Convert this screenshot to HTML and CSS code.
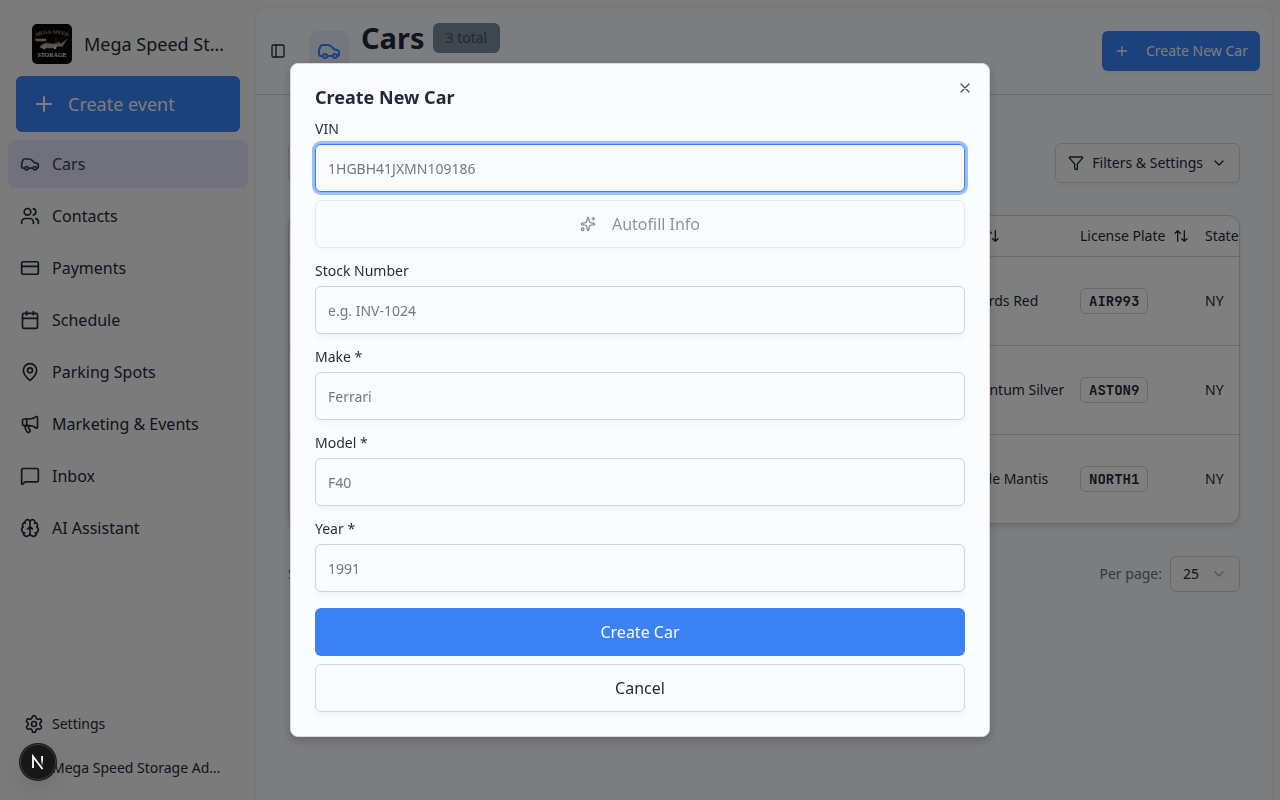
FILE: index.html
```
<!DOCTYPE html>
<html lang="en">
<head>
    <meta charset="UTF-8">
    <meta name="viewport" content="width=device-width, initial-scale=1.0">
    <title>Cars</title>
    <link rel="stylesheet" href="styles.css">
</head>
<body>
<div class="app">
    <aside class="sidebar">
        <div class="brand">
            <svg class="brand-logo" viewBox="0 0 40 40">
                <rect width="40" height="40" rx="5" fill="#070707"/>
                <path id="arc" d="M2 13 Q20 6 38 13" fill="none"/>
                <text class="logo-top" text-anchor="middle"><textPath href="#arc" startOffset="50%">MEGA SPEED</textPath></text>
                <path d="M3 15h11v2H4zM9 21l5-2 7 1 6-1v3l-5 2H8zM24 14v7M26 17l3 3 6-5-5 8-3-1z" fill="#b5afa4" stroke="#8d8579" stroke-width=".5"/>
                <circle cx="12" cy="24" r="1.3" fill="#ddd"/>
                <circle cx="23" cy="24" r="1.3" fill="#ddd"/>
                <text class="logo-bottom" x="20" y="33" text-anchor="middle">STORAGE</text>
            </svg>
            <span class="brand-name">Mega Speed Storage</span>
        </div>
        <button class="btn btn-primary create-event" type="button">
            <svg class="icon icon-lg" viewBox="0 0 24 24"><path d="M5 12h14M12 5v14"/></svg>
            Create event
        </button>
        <nav class="nav">
            <a class="nav-item active" href="#">
                <svg class="icon icon-md" viewBox="0 0 24 24"><path d="M6 17H4a2 2 0 0 1-2-2v-4l1.500-3.500A2 2 0 0 1 5.300 6H11c1.500 0 2.600.7 3.500 1.600L17.500 10.500l3 .7A2 2 0 0 1 22 13.100V16a1 1 0 0 1-1 1h-1"/><circle cx="8" cy="17" r="2"/><path d="M10 17h6"/><circle cx="18" cy="17" r="2"/></svg>
                Cars
            </a>
            <a class="nav-item" href="#">
                <svg class="icon icon-md" viewBox="0 0 24 24"><path d="M16 21v-2a4 4 0 0 0-4-4H6a4 4 0 0 0-4 4v2"/><circle cx="9" cy="7" r="4"/><path d="M22 21v-2a4 4 0 0 0-3-3.870M16 3.130a4 4 0 0 1 0 7.750"/></svg>
                Contacts
            </a>
            <a class="nav-item" href="#">
                <svg class="icon icon-md" viewBox="0 0 24 24"><rect x="2" y="4.500" width="20" height="15" rx="2"/><path d="M2 10h20"/></svg>
                Payments
            </a>
            <a class="nav-item" href="#">
                <svg class="icon icon-md" viewBox="0 0 24 24"><path d="M8 2v4M16 2v4M3 10h18"/><rect x="3" y="4" width="18" height="18" rx="2"/></svg>
                Schedule
            </a>
            <a class="nav-item" href="#">
                <svg class="icon icon-md" viewBox="0 0 24 24"><path d="M20 10c0 4.993-5.539 10.193-7.399 11.799a1 1 0 0 1-1.202 0C9.539 20.193 4 14.993 4 10a8 8 0 0 1 16 0"/><circle cx="12" cy="10" r="3"/></svg>
                Parking Spots
            </a>
            <a class="nav-item" href="#">
                <svg class="icon icon-md" viewBox="0 0 24 24"><path d="M11 6a13 13 0 0 0 8.400-2.800A1 1 0 0 1 21 4v12a1 1 0 0 1-1.600.8A13 13 0 0 0 11 14H5a2 2 0 0 1-2-2V8a2 2 0 0 1 2-2z"/><path d="M6 14a12 12 0 0 0 2.400 7.200 2 2 0 0 0 3.200-2.400A8 8 0 0 1 10 14M8 6v8"/></svg>
                Marketing &amp; Events
            </a>
            <a class="nav-item" href="#">
                <svg class="icon icon-md" viewBox="0 0 24 24"><path d="M22 17a2 2 0 0 1-2 2H6.828a2 2 0 0 0-1.414.586l-2.202 2.202A.71.71 0 0 1 2 21.286V5a2 2 0 0 1 2-2h16a2 2 0 0 1 2 2z"/></svg>
                Inbox
            </a>
            <a class="nav-item" href="#">
                <svg class="icon icon-md" viewBox="0 0 24 24"><path d="M12 18V5M15 13a4.170 4.170 0 0 1-3-4 4.170 4.170 0 0 1-3 4M17.598 6.500A3 3 0 1 0 12 5a3 3 0 1 0-5.598 1.500M17.997 5.125a4 4 0 0 1 2.526 5.770M18 18a4 4 0 0 0 2-7.464M19.967 17.483A4 4 0 1 1 12 18a4 4 0 1 1-7.967-.517M6 18a4 4 0 0 1-2-7.464M6.003 5.125a4 4 0 0 0-2.526 5.770"/></svg>
                AI Assistant
            </a>
        </nav>
        <div class="sidebar-footer">
            <a class="footer-item" href="#">
                <svg class="icon icon-md" viewBox="0 0 24 24"><path d="M9.671 4.136a2.340 2.340 0 0 1 4.659 0 2.340 2.340 0 0 0 3.319 1.915 2.340 2.340 0 0 1 2.330 4.033 2.340 2.340 0 0 0 0 3.831 2.340 2.340 0 0 1-2.330 4.033 2.340 2.340 0 0 0-3.319 1.915 2.340 2.340 0 0 1-4.659 0 2.340 2.340 0 0 0-3.320-1.915 2.340 2.340 0 0 1-2.330-4.033 2.340 2.340 0 0 0 0-3.831A2.340 2.340 0 0 1 6.350 6.051a2.340 2.340 0 0 0 3.319-1.915"/><circle cx="12" cy="12" r="3"/></svg>
                <span>Settings</span>
            </a>
            <a class="footer-item" href="#">
                <i class="avatar"></i>
                <span>Mega Speed Storage Admin</span>
            </a>
        </div>
    </aside>

    <main class="main">
        <header class="page-header">
            <button class="toggle" type="button" aria-label="Toggle sidebar">
                <svg class="icon icon-sm" viewBox="0 0 24 24"><rect x="3" y="3" width="18" height="18" rx="2"/><path d="M9 3v18"/></svg>
            </button>
            <div class="page-icon">
                <svg class="icon icon-lg" viewBox="0 0 24 24"><path d="M6 17H4a2 2 0 0 1-2-2v-4l1.500-3.500A2 2 0 0 1 5.300 6H11c1.500 0 2.600.7 3.500 1.600L17.500 10.500l3 .7A2 2 0 0 1 22 13.100V16a1 1 0 0 1-1 1h-1"/><circle cx="8" cy="17" r="2"/><path d="M10 17h6"/><circle cx="18" cy="17" r="2"/></svg>
            </div>
            <div class="page-title">
                <h1>Cars</h1>
                <span class="badge">3 total</span>
            </div>
            <button class="btn btn-primary create-car" type="button">
                <svg class="icon icon-sm" viewBox="0 0 24 24"><path d="M5 12h14M12 5v14"/></svg>
                Create New Car
            </button>
        </header>

        <section class="content">
            <div class="toolbar">
                <input class="search" type="search" aria-label="Search cars">
                <button class="btn btn-outline" type="button">
                    <svg class="icon icon-sm" viewBox="0 0 24 24"><path d="M10 20a1 1 0 0 0 .553.895l2 1A1 1 0 0 0 14 21v-7a2 2 0 0 1 .517-1.341L21.740 4.670A1 1 0 0 0 21 3H3a1 1 0 0 0-.742 1.670l7.225 7.989A2 2 0 0 1 10 14z"/></svg>
                    Filters &amp; Settings
                    <svg class="icon icon-sm" viewBox="0 0 24 24"><path d="m6 9 6 6 6-6"/></svg>
                </button>
            </div>

            <div class="table-card">
                <table>
                    <colgroup>
                        <col>
                        <col class="col-color">
                        <col class="col-plate">
                        <col class="col-state">
                    </colgroup>
                    <thead>
                        <tr>
                            <th></th>
                            <th><span class="sort">Color <svg class="icon icon-sm" viewBox="0 0 24 24"><path d="m3 8 4-4 4 4M7 4v16M21 16l-4 4-4-4M17 20V4"/></svg></span></th>
                            <th><span class="sort">License Plate <svg class="icon icon-sm" viewBox="0 0 24 24"><path d="m3 8 4-4 4 4M7 4v16M21 16l-4 4-4-4M17 20V4"/></svg></span></th>
                            <th>State</th>
                        </tr>
                    </thead>
                    <tbody>
                        <tr><td></td><td class="color">Guards Red</td><td><span class="plate">AIR993</span></td><td>NY</td></tr>
                        <tr><td></td><td class="color">Quantum Silver</td><td><span class="plate">ASTON9</span></td><td>NY</td></tr>
                        <tr><td></td><td class="color">Verde Mantis</td><td><span class="plate">NORTH1</span></td><td>NY</td></tr>
                    </tbody>
                </table>
            </div>

            <div class="pager">
                <span class="showing">Showing</span>
                <label for="per-page">Per page:</label>
                <div class="select">
                    <select id="per-page">
                        <option>25</option>
                    </select>
                    <svg class="icon icon-sm" viewBox="0 0 24 24"><path d="m6 9 6 6 6-6"/></svg>
                </div>
            </div>
        </section>
    </main>
</div>

<div class="overlay">
    <form class="dialog" role="dialog" aria-labelledby="dialog-title">
        <h2 id="dialog-title">Create New Car</h2>
        <button class="close" type="button" aria-label="Close">
            <svg class="icon icon-sm" viewBox="0 0 24 24"><path d="M18 6 6 18M6 6l12 12"/></svg>
        </button>
        <div class="field">
            <label for="vin">VIN</label>
            <input class="focused" id="vin" type="text" placeholder="1HGBH41JXMN109186">
            <button class="btn btn-outline btn-block" type="button" disabled>
                <svg class="icon icon-sm" viewBox="0 0 24 24"><path d="M11.017 2.814a1 1 0 0 1 1.966 0l1.051 5.558a2 2 0 0 0 1.594 1.594l5.558 1.051a1 1 0 0 1 0 1.966l-5.558 1.051a2 2 0 0 0-1.594 1.594l-1.051 5.558a1 1 0 0 1-1.966 0l-1.051-5.558a2 2 0 0 0-1.594-1.594l-5.558-1.051a1 1 0 0 1 0-1.966l5.558-1.051a2 2 0 0 0 1.594-1.594zM20 2v4M22 4h-4"/><circle cx="4" cy="20" r="2"/></svg>
                Autofill Info
            </button>
        </div>
        <div class="field">
            <label for="stock">Stock Number</label>
            <input id="stock" type="text" placeholder="e.g. INV-1024">
        </div>
        <div class="field">
            <label for="make">Make *</label>
            <input id="make" type="text" placeholder="Ferrari">
        </div>
        <div class="field">
            <label for="model">Model *</label>
            <input id="model" type="text" placeholder="F40">
        </div>
        <div class="field">
            <label for="year">Year *</label>
            <input id="year" type="text" placeholder="1991">
        </div>
        <div class="actions">
            <button class="btn btn-primary btn-block" type="submit">Create Car</button>
            <button class="btn btn-outline btn-block" type="button">Cancel</button>
        </div>
    </form>
</div>

<button class="dev-badge" type="button" aria-label="Dev tools">
    <svg viewBox="0 0 20 20">
        <defs>
            <linearGradient id="fade" x1="0" y1="0" x2="0" y2="1">
                <stop offset="0.4" stop-color="#fff"/>
                <stop offset="1" stop-color="#fff" stop-opacity="0"/>
            </linearGradient>
        </defs>
        <path d="M5 16V4.500L14.500 17" fill="none" stroke="#fff" stroke-width="1.800"/>
        <rect x="13.200" y="4" width="1.800" height="10" fill="url(#fade)"/>
    </svg>
</button>
</body>
</html>
```
FILE: styles.css
```
* {
    box-sizing: border-box;
}

body {
    margin: 0;
    font-family: "Noto Sans", sans-serif;
    font-size: 14px;
    line-height: 20px;
    color: #1e293b;
    background: #f6f6f6;
}

h1, h2 {
    margin: 0;
}

a {
    color: inherit;
    text-decoration: none;
}

button, input, select {
    font: inherit;
    color: inherit;
}

/* icons */
.icon {
    flex: none;
    fill: none;
    stroke: currentColor;
    stroke-width: 2;
    stroke-linecap: round;
    stroke-linejoin: round;
}

.icon-sm { width: 16px; height: 16px; }
.icon-md { width: 20px; height: 20px; }
.icon-lg { width: 24px; height: 24px; }

/* buttons */
.btn {
    display: flex;
    align-items: center;
    border: 1px solid transparent;
    border-radius: 6px;
    white-space: nowrap;
    cursor: pointer;
}

.btn-primary {
    color: #f8fafc;
    background: #3b82f6;
}

.btn-outline {
    height: 40px;
    padding: 0 12px;
    gap: 8px;
    border-color: #d4d6da;
    background: #fafbfd;
    box-shadow: 0 4px 6px rgba(0, 0, 0, 0.04);
}

.btn-block {
    justify-content: center;
    width: 100%;
    height: 48px;
    gap: 16px;
    font-size: 16px;
}

.btn:disabled {
    opacity: 0.5;
}

/* layout */
.app {
    display: flex;
    min-height: 100vh;
}

.sidebar {
    display: flex;
    flex-direction: column;
    flex: none;
    width: 256px;
    padding: 24px 8px 12px;
}

.brand {
    display: flex;
    align-items: center;
    gap: 12px;
    padding: 0 24px;
}

.brand-logo {
    flex: none;
    width: 40px;
    height: 40px;
}

.logo-top, .logo-bottom {
    font-family: "Liberation Serif", serif;
    font-weight: bold;
    font-size: 5px;
    fill: #b3925e;
}

.logo-bottom {
    font-size: 6px;
    fill: #e2e2e2;
}

.brand-name {
    overflow: hidden;
    max-width: 140px;
    font-size: 18px;
    line-height: 28px;
    text-overflow: ellipsis;
    white-space: nowrap;
}

.create-event {
    height: 56px;
    margin: 12px 8px 8px;
    padding: 0 15px;
    gap: 12px;
    font-size: 18px;
}

.nav {
    display: flex;
    flex-direction: column;
    gap: 4px;
}

.nav-item {
    display: flex;
    align-items: center;
    gap: 12px;
    height: 48px;
    padding: 0 12px;
    border-radius: 6px;
    font-size: 16px;
}

.nav-item.active {
    background: #e0e2fa;
    color: #334155;
}

.sidebar-footer {
    display: flex;
    flex-direction: column;
    gap: 4px;
    margin-top: auto;
}

.footer-item {
    display: flex;
    align-items: center;
    gap: 8px;
    height: 40px;
    padding: 0 24px 0 16px;
}

.footer-item span {
    overflow: hidden;
    text-overflow: ellipsis;
    white-space: nowrap;
}

.avatar {
    flex: none;
    width: 20px;
    height: 20px;
    border-radius: 50%;
    background: #e2e8f0;
}

.main {
    flex: 1;
    min-width: 0;
    margin: 8px 8px 0 0;
    border-radius: 12px 12px 0 0;
    background: #f9fbfe;
    box-shadow: 0 1px 4px rgba(0, 0, 0, 0.1);
}

/* page header */
.page-header {
    display: flex;
    align-items: center;
    gap: 12px;
    height: 87px;
    padding: 0 12px;
    border-bottom: 1px solid #d0d2d6;
}

.toggle {
    display: flex;
    justify-content: center;
    width: 20px;
    margin-right: 9px;
    padding: 0;
    border: 0;
    background: none;
}

.page-icon {
    display: flex;
    padding: 8px;
    border-radius: 8px;
    color: #3b82f6;
    background: #e6effd;
}

.page-title {
    display: flex;
    align-items: center;
    gap: 8px;
    height: 36px;
    margin-bottom: 26px;
}

.page-title h1 {
    font-size: 29px;
    line-height: 36px;
}

.badge {
    padding: 5px 13px;
    border-radius: 6px;
    color: #465260;
    background: #7c8c9c;
}

.create-car {
    height: 40px;
    margin-left: auto;
    padding: 0 11px;
    gap: 16px;
    box-shadow: 0 4px 6px rgba(0, 0, 0, 0.04);
}

/* content */
.content {
    display: flex;
    flex-direction: column;
    gap: 32px;
    padding: 48px 32px 32px;
}

.toolbar {
    display: flex;
    justify-content: space-between;
}

.search {
    width: 320px;
    height: 40px;
    border: 1px solid #d4d6da;
    border-radius: 6px;
    background: #fafbfd;
}

.table-card {
    overflow: hidden;
    border: 1px solid #cfd1d4;
    border-radius: 12px;
    background: #fff;
    box-shadow: 0 4px 6px rgba(0, 0, 0, 0.1);
}

/* columns run past the card edge */
table {
    width: calc(100% + 38px);
    table-layout: fixed;
    border-collapse: separate;
    border-spacing: 0;
}

.col-color { width: 139px; }
.col-plate { width: 125px; }
.col-state { width: 80px; }

th, td {
    padding: 0 8px;
    border-bottom: 1px solid #cfd1d4;
    text-align: left;
    font-weight: 400;
    white-space: nowrap;
}

th {
    height: 41px;
}

td {
    height: 89px;
}

tr:last-child td {
    height: 88px;
    border-bottom: 0;
}

td.color {
    padding-left: 29px;
}

.sort {
    display: flex;
    align-items: center;
    gap: 8px;
}

.plate {
    display: inline-block;
    padding: 2px 8px;
    border: 1px solid #cfd1d4;
    border-radius: 6px;
    font-family: "JetBrains Mono", "DejaVu Sans Mono", monospace;
    font-weight: 600;
}

.pager {
    display: flex;
    align-items: center;
    gap: 8px;
    color: #6b7280;
}

.showing {
    margin-right: auto;
}

.select {
    position: relative;
    color: #1e293b;
}

.select select {
    width: 70px;
    height: 36px;
    padding: 0 12px;
    border: 1px solid #d0d2d6;
    border-radius: 6px;
    background: #fafbfd;
    appearance: none;
}

.select .icon {
    position: absolute;
    top: 10px;
    right: 13px;
    opacity: 0.4;
}

/* dialog */
.overlay {
    position: fixed;
    inset: 0;
    display: grid;
    place-items: center;
    background: rgba(0, 0, 0, 0.5);
}

.dialog {
    position: relative;
    display: flex;
    flex-direction: column;
    gap: 16px;
    width: 100%;
    max-width: 700px;
    padding: 24px;
    border: 1px solid #d8dade;
    border-radius: 8px;
    background: #fafcfe;
    box-shadow: 0 4px 10px rgba(0, 0, 0, 0.2);
}

.dialog h2 {
    font-size: 18px;
    line-height: 18px;
    font-weight: 700;
}

.close {
    position: absolute;
    top: 16px;
    right: 16px;
    display: flex;
    padding: 0;
    border: 0;
    background: none;
    opacity: 0.8;
}

.field, .actions {
    display: flex;
    flex-direction: column;
    gap: 8px;
}

.field label {
    line-height: 14px;
}

.field input {
    width: 100%;
    height: 48px;
    padding: 0 12px;
    border: 1px solid #d0d2d6;
    border-radius: 6px;
    outline: 0;
    background: #fafcfe;
    box-shadow: 0 4px 6px rgba(0, 0, 0, 0.04);
}

.field input::placeholder {
    color: #737780;
}

.field input.focused {
    border-color: #3b82f6;
    box-shadow: 0 0 0 3px rgba(59, 130, 246, 0.5);
}

/* floating dev button */
.dev-badge {
    position: fixed;
    left: 20px;
    bottom: 20px;
    display: grid;
    place-items: center;
    width: 36px;
    height: 36px;
    padding: 0;
    border: 1px solid #3c3c3c;
    border-radius: 50%;
    background: #171717;
    box-shadow: 0 0 0 1px #171717, 0 8px 24px rgba(0, 0, 0, 0.1);
}

.dev-badge svg {
    width: 20px;
    height: 20px;
}
```
